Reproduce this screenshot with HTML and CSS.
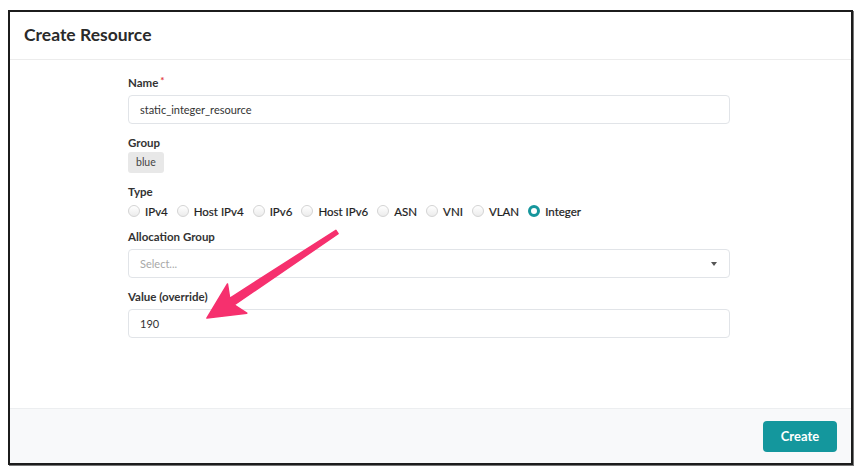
FILE: index.html
```html
<!DOCTYPE html>
<html>
<head>
<meta charset="utf-8">
<link rel="stylesheet" href="styles.css">
</head>
<body>
<div class="frame">
  <div class="header"><h1 class="title">Create Resource</h1></div>
  <div class="body">
    <form class="form">
      <label class="label">Name<span class="req">*</span></label>
      <div class="input">static_integer_resource</div>

      <label class="label lbl-gap">Group</label>
      <div class="chips"><span class="chip">blue</span></div>

      <label class="label lbl-gap">Type</label>
      <div class="radios">
        <span class="radio"><span class="dot"></span>IPv4</span>
        <span class="radio"><span class="dot"></span>Host IPv4</span>
        <span class="radio"><span class="dot"></span>IPv6</span>
        <span class="radio"><span class="dot"></span>Host IPv6</span>
        <span class="radio"><span class="dot"></span>ASN</span>
        <span class="radio"><span class="dot"></span>VNI</span>
        <span class="radio"><span class="dot"></span>VLAN</span>
        <span class="radio"><span class="dot checked"></span>Integer</span>
      </div>

      <label class="label lbl-gap2">Allocation Group</label>
      <div class="input select"><span class="placeholder">Select...</span><span class="caret"></span></div>

      <label class="label lbl-gap">Value (override)</label>
      <div class="input">190</div>
    </form>
  </div>
  <div class="footer"><button class="btn" type="button">Create</button></div>
</div>
<svg class="arrow" width="865" height="474" viewBox="0 0 865 474">
  <polygon points="335.9,230.3 338.1,233.7 234.1,304.9 246.8,313.2 206.9,318.1 227.5,284 229.7,298.3" fill="#f6306e" stroke="#f6306e" stroke-width="1.5" stroke-linejoin="round"/>
</svg>
</body>
</html>
```

FILE: styles.css
```css
html, body {
  margin: 0;
  padding: 0;
  background: #fff;
}
body {
  width: 865px;
  height: 474px;
  position: relative;
  font-family: Lato, "Open Sans", sans-serif;
  color: #333;
}
.frame {
  position: relative;
  margin: 10px 0 0 8px;
  width: 841px;
  height: 451px;
  border: 2px solid #1c1c1c;
  box-shadow: 1px 1px 0 #777;
  display: flex;
  flex-direction: column;
  background: #fff;
}
.header {
  box-sizing: border-box;
  height: 48px;
  border-bottom: 1px solid #ececec;
  display: flex;
  align-items: center;
  padding-left: 14px;
  padding-bottom: 2px;
}
.title {
  margin: 0;
  font-size: 17.5px;
  font-weight: 700;
  color: #2a2a2a;
}
.body {
  flex: 1;
  padding-top: 15px;
}
.form {
  margin-left: 118px;
  width: 602px;
  display: flex;
  flex-direction: column;
}
.label {
  display: block;
  font-size: 11.5px;
  font-weight: 700;
  line-height: 16px;
  color: #333;
  margin-bottom: 4px;
}
.lbl-gap { margin-top: 11px; margin-bottom: 1px; }
.lbl-gap2 { margin-top: 10px; margin-bottom: 4px; }
.req {
  color: #e23c3c;
  font-size: 10px;
  vertical-align: top;
  position: relative;
  top: -3px;
  margin-left: 2px;
}
.input {
  box-sizing: border-box;
  height: 29px;
  border: 1px solid #e1e4e8;
  border-radius: 4px;
  padding: 0 11px;
  font-size: 11px;
  line-height: 27px;
  color: #333;
  display: flex;
  align-items: center;
}
.lbl-gap + .input { margin-top: 3px; }
.select {
  justify-content: space-between;
}
.placeholder { color: #a8a8a8; }
.caret {
  width: 0;
  height: 0;
  border-left: 3.5px solid transparent;
  border-right: 3.5px solid transparent;
  border-top: 4px solid #555;
  margin-right: 1px;
}
.chips { display: flex; }
.chip {
  background: #e8e8e8;
  border-radius: 3px;
  font-size: 10.5px;
  color: #444;
  padding: 0 8px;
  height: 21px;
  line-height: 21px;
}
.radios {
  display: flex;
  align-items: center;
  gap: 9px;
  margin-top: 2px;
  height: 16px;
}
.radio {
  display: flex;
  align-items: center;
  font-size: 11.5px;
  font-weight: 400;
  color: #222;
  -webkit-text-stroke: 0.2px #222;
}
.dot {
  box-sizing: border-box;
  width: 12px;
  height: 12px;
  border-radius: 50%;
  border: 1px solid #d4d4d4;
  background: linear-gradient(#ffffff, #ececec);
  margin-right: 5px;
}
.dot.checked {
  border: 3.5px solid #16969c;
  background: #fff;
}
.footer {
  height: 54px;
  border-top: 1px solid #eceef0;
  background: #f8f9fa;
  display: flex;
  align-items: center;
  justify-content: flex-end;
  padding-right: 14px;
}
.btn {
  width: 74px;
  height: 31px;
  border: none;
  border-radius: 4px;
  background: #14979d;
  color: #fff;
  font-family: Lato, sans-serif;
  font-weight: 700;
  font-size: 13px;
}
.arrow {
  position: absolute;
  left: 0;
  top: 0;
  pointer-events: none;
}
```
